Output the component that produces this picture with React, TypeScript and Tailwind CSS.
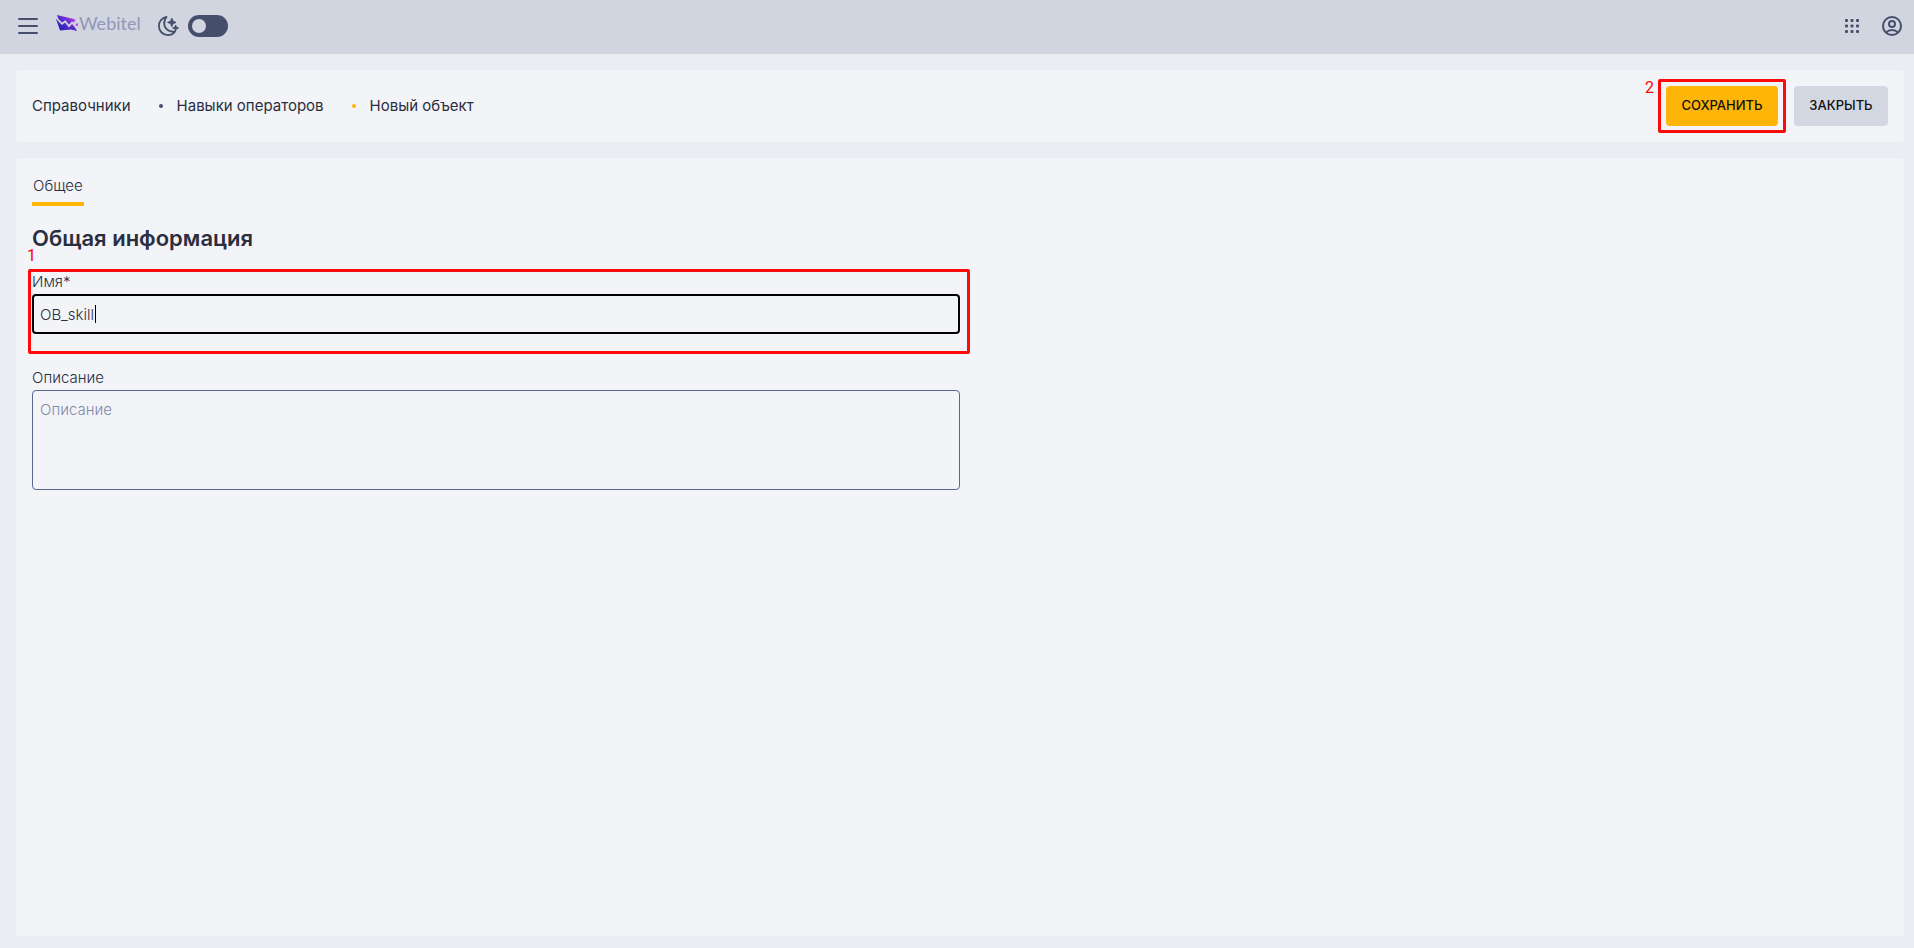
import { useState } from "react";
import type { ReactNode } from "react";

const breadcrumbs = ["Справочники", "Навыки операторов", "Новый объект"];

function MenuIcon() {
  return (
    <svg className="h-6 w-6" viewBox="0 0 24 24" fill="none" stroke="currentColor" strokeWidth="2" strokeLinecap="round">
      <path d="M3 5h18M3 12h18M3 19h18" />
    </svg>
  );
}

function LogoMark() {
  return (
    <svg className="h-4 w-[22px]" viewBox="0 0 22 16">
      <defs>
        <linearGradient id="logo" x1="0" y1="1" x2="1" y2="0">
          <stop offset="0" stopColor="#1b1fb0" />
          <stop offset="0.5" stopColor="#5a2cc8" />
          <stop offset="1" stopColor="#d53df0" />
        </linearGradient>
      </defs>
      <path d="M1 0L18 4L17 9L21 16L15 14.6L4 15.4L0 4L2.400 4.500Z" fill="url(#logo)" />
      <path d="M0.500 3L6 8.800L9.200 6.400L13 11L16 7.600L20 12" fill="none" stroke="#d1d5e0" strokeWidth="1.800" />
      <path d="M17 4.200h2.200v2.200H17zM19.800 8.600h2.200v2.200h-2.200z" fill="#c83be8" />
    </svg>
  );
}

function MoonIcon() {
  return (
    <svg className="h-6 w-6" viewBox="0 0 24 24" fill="none" stroke="currentColor" strokeWidth="1.8" strokeLinejoin="round">
      <path d="M10.5 2.900C5.900 3.600 2.900 7.400 2.900 12c0 5.200 4 9.100 9 9.100 3.200 0 5.800-1.400 7.300-3.800C13.400 18.600 8.600 15 8.200 10c-.2-2.700.6-5.200 2.300-7.100Z" />
      <path
        d="M15.800 4.200l1.200 3 3 1.200-3 1.200-1.200 3-1.200-3-3-1.200 3-1.200zM19.600 11l.8 2.200 2.200.8-2.200.8-.8 2.200-.8-2.200-2.200-.8 2.200-.8z"
        fill="currentColor"
        strokeWidth="1"
      />
    </svg>
  );
}

function AppsIcon() {
  return (
    <svg className="h-6 w-6" viewBox="0 0 24 24" fill="currentColor">
      {[5, 10.5, 16].map((y) =>
        [5, 10.5, 16].map((x) => <rect key={`${x}-${y}`} x={x} y={y} width="3" height="3" rx="1" />)
      )}
    </svg>
  );
}

function UserIcon() {
  return (
    <svg className="h-6 w-6" viewBox="0 0 24 24" fill="none" stroke="currentColor" strokeWidth="2">
      <circle cx="12" cy="12" r="9" />
      <circle cx="12" cy="10" r="3" />
      <path d="M6 18.700c1.600-1.800 3.700-2.700 6-2.700s4.400.9 6 2.700" />
    </svg>
  );
}

function Callout({ label, className, labelClassName }: { label: ReactNode; className: string; labelClassName: string }) {
  return (
    <div className={`pointer-events-none absolute rounded-xs border-3 border-[#ff0a0a] ${className}`}>
      <span className={`absolute font-[Roboto] text-base leading-4 font-normal text-[#ff0000] ${labelClassName}`}>{label}</span>
    </div>
  );
}

function Header() {
  const [dark, setDark] = useState(false);

  return (
    <header className="flex h-[54px] items-center justify-between bg-[#d1d5e0] pr-2.5 pb-0.5 pl-4 text-[#454f6b]">
      <div className="flex items-center">
        <button type="button" aria-label="Меню">
          <MenuIcon />
        </button>
        <a href="#" className="ml-4 flex items-center gap-px pb-1.5 font-[Lato] text-lg leading-6 text-[#8f98b8]">
          <LogoMark />
          Webitel
        </a>
        <div className="ml-[15px] flex items-center gap-2">
          <MoonIcon />
          <label className="flex h-[22px] w-10 items-center rounded-full bg-[#454f6b] px-1">
            <input
              type="checkbox"
              aria-label="Тёмная тема"
              className="peer sr-only"
              checked={dark}
              onChange={(e) => setDark(e.target.checked)}
            />
            <span className="h-3.5 w-3.5 rounded-full bg-[#d1d5e0] peer-checked:ml-auto" />
          </label>
        </div>
      </div>
      <div className="flex items-center gap-4">
        <button type="button" aria-label="Приложения">
          <AppsIcon />
        </button>
        <button type="button" aria-label="Профиль">
          <UserIcon />
        </button>
      </div>
    </header>
  );
}

export default function App() {
  const [name, setName] = useState("OB_skill");
  const [description, setDescription] = useState("");

  return (
    <div className="flex min-h-screen flex-col bg-[#ecedf3] font-[Inter,sans-serif] text-[#2b2e3f]">
      <Header />
      <main className="flex flex-1 flex-col gap-4 pt-4 pr-2.5 pb-3 pl-4">
        <section className="flex h-[72px] items-center justify-between rounded bg-[#f2f4f8] px-4">
          <nav className="flex items-center text-[15px] leading-6">
            {breadcrumbs.map((item, i) => (
              <div key={item} className="flex items-center">
                {i > 0 && (
                  <span className={`mr-3.5 ml-7 h-1 w-1 rounded-full ${i === 2 ? "bg-[#ffb507]" : "bg-[#454f6b]"}`} />
                )}
                <a href="#">{item}</a>
              </div>
            ))}
          </nav>
          <div className="flex gap-4 text-[13px] font-medium text-[#111]">
            <div className="relative">
              <button type="button" className="h-10 w-28 rounded bg-[#ffb507] text-center">
                СОХРАНИТЬ
              </button>
              <Callout label="2" className="-inset-x-2 -inset-y-[7px]" labelClassName="-left-4 -top-0.5" />
            </div>
            <button type="button" className="h-10 w-[94px] rounded bg-[#d3d7e2] text-center">
              ЗАКРЫТЬ
            </button>
          </div>
        </section>

        <section className="flex-1 rounded bg-[#f2f4f8] px-4 pt-4">
          <div role="tablist" className="flex">
            <button role="tab" type="button" aria-selected="true" className="border-b-4 border-[#ffb507] px-px pb-1 text-[15px] leading-6 font-light">
              Общее
            </button>
          </div>
          <h1 className="mt-5 text-[22px] leading-6 font-semibold">Общая информация</h1>

          <form className="mt-5 w-1/2 text-[15px] leading-6 font-light" onSubmit={(e) => e.preventDefault()}>
            <div className="relative">
              <label htmlFor="name" className="block">
                Имя*
              </label>
              <div className="relative">
                <input
                  id="name"
                  value={name}
                  onChange={(e) => setName(e.target.value)}
                  className="block h-10 w-full rounded border-2 border-black px-1.5 outline-none"
                />
                <span className="absolute top-[11px] left-[63px] h-[18px] w-px bg-black" />
              </div>
              <Callout label="1" className="-top-px -right-2.5 -bottom-5 -left-1" labelClassName="-top-6 -left-1" />
            </div>
            <div className="mt-8">
              <label htmlFor="description" className="block">
                Описание
              </label>
              <textarea
                id="description"
                placeholder="Описание"
                value={description}
                onChange={(e) => setDescription(e.target.value)}
                className="block h-[100px] w-full resize-none rounded border border-[#5b6690] px-[7px] py-[7px] outline-none placeholder:text-[#7f89a8]"
              />
            </div>
          </form>
        </section>
      </main>
    </div>
  );
}
